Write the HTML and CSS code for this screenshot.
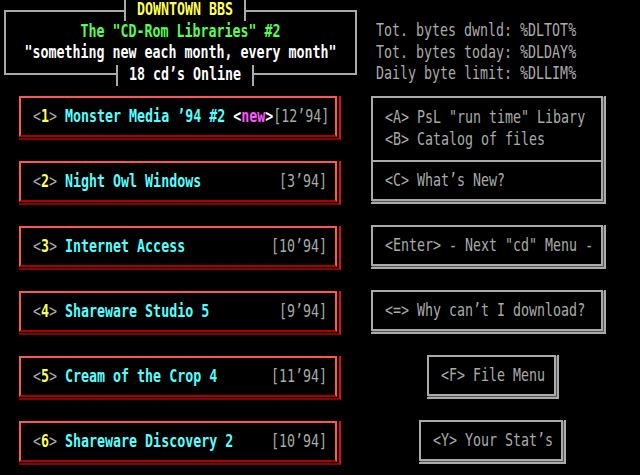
FILE: index.html
```html
<!DOCTYPE html>
<html lang="en">
<head>
<meta charset="utf-8">
<title>DOWNTOWN BBS</title>
<link rel="stylesheet" href="styles.css">
</head>
<body>
<div class="screen">
  <header class="top">
    <div class="frame">
      <div class="frame-title"><span class="t">DOWNTOWN BBS</span></div>
      <div class="frame-line green t">The "CD-Rom Libraries" #2</div>
      <div class="frame-line white t">"something new each month, every month"</div>
      <div class="frame-foot"><span class="t">18 cd’s Online</span></div>
    </div>
    <div class="stats">
      <div class="t">Tot. bytes dwnld: %DLTOT%</div>
      <div class="t">Tot. bytes today: %DLDAY%</div>
      <div class="t">Daily byte limit: %DLLIM%</div>
    </div>
  </header>
  <main class="menu">
    <div class="col-left">
      <div class="rbox"><div class="row t"><span><span class="br">&lt;</span><span class="key">1</span><span class="br">&gt;</span> <span class="name">Monster Media ’94 #2</span> <span class="wb">&lt;</span><span class="new">new</span><span class="wb">&gt;</span></span><span class="date">[12’94]</span></div></div>
      <div class="rbox"><div class="row t"><span><span class="br">&lt;</span><span class="key">2</span><span class="br">&gt;</span> <span class="name">Night Owl Windows</span></span><span class="date">[3’94]</span></div></div>
      <div class="rbox"><div class="row t"><span><span class="br">&lt;</span><span class="key">3</span><span class="br">&gt;</span> <span class="name">Internet Access</span></span><span class="date">[10’94]</span></div></div>
      <div class="rbox"><div class="row t"><span><span class="br">&lt;</span><span class="key">4</span><span class="br">&gt;</span> <span class="name">Shareware Studio 5</span></span><span class="date">[9’94]</span></div></div>
      <div class="rbox"><div class="row t"><span><span class="br">&lt;</span><span class="key">5</span><span class="br">&gt;</span> <span class="name">Cream of the Crop 4</span></span><span class="date">[11’94]</span></div></div>
      <div class="rbox"><div class="row t"><span><span class="br">&lt;</span><span class="key">6</span><span class="br">&gt;</span> <span class="name">Shareware Discovery 2</span></span><span class="date">[10’94]</span></div></div>
    </div>
    <div class="col-right">
      <div class="gbox split">
        <div class="sec sec-top">
          <div class="t">&lt;A&gt; PsL "run time" Libary</div>
          <div class="t">&lt;B&gt; Catalog of files</div>
        </div>
        <div class="sec sec-bot">
          <div class="t">&lt;C&gt; What’s New?</div>
        </div>
      </div>
      <div class="gbox single wide"><div class="t">&lt;Enter&gt; - Next "cd" Menu -</div></div>
      <div class="gbox single wide"><div class="t">&lt;=&gt; Why can’t I download?</div></div>
      <div class="gbox single file"><div class="t">&lt;F&gt; File Menu</div></div>
      <div class="gbox single yours"><div class="t">&lt;Y&gt; Your Stat’s</div></div>
    </div>
  </main>
</div>
</body>
</html>
```

FILE: styles.css
```css
html, body {
  margin: 0;
  padding: 0;
  background: #000;
}

.screen {
  width: 640px;
  height: 475px;
  overflow: hidden;
  background: #000;
  color: #aaaaaa;
  font-family: "DejaVu Sans Mono", "Liberation Mono", monospace;
  font-size: 13.3px;
  white-space: nowrap;
}

.t {
  display: block;
  transform: scaleY(1.3);
}

span.t {
  display: inline-block;
}

/* ---------- header ---------- */
.top {
  display: flex;
  height: 96px;
}

.frame {
  position: relative;
  box-sizing: border-box;
  margin: 10px 0 0 4px;
  width: 353px;
  height: 65px;
  border: 2px solid #aaaaaa;
  padding-top: 10px;
  text-align: center;
}

.frame-line {
  line-height: 20.5px;
  font-weight: bold;
}

.green { color: #55ff55; }
.white { color: #ffffff; }

.frame-title,
.frame-foot {
  position: absolute;
  box-sizing: border-box;
  height: 21px;
  border-left: 2px solid #aaaaaa;
  border-right: 2px solid #aaaaaa;
  background: #000;
  text-align: center;
  line-height: 19px;
  font-weight: bold;
}

.frame-title {
  left: 118px;
  top: -12px;
  width: 122px;
  color: #ffff55;
}

.frame-foot {
  left: 110px;
  top: 53px;
  width: 138px;
  color: #ffffff;
}

.stats {
  margin-left: 19px;
  padding-top: 20px;
  line-height: 21.5px;
  color: #aaaaaa;
}

/* ---------- menu ---------- */
.menu {
  display: flex;
}

.col-left {
  margin-left: 19px;
  width: 322px;
  display: flex;
  flex-direction: column;
  gap: 24px;
}

.col-right {
  margin-left: 30px;
  width: 240px;
  display: flex;
  flex-direction: column;
  align-items: flex-start;
  gap: 24px;
}

.rbox {
  position: relative;
  box-sizing: border-box;
  width: 318px;
  height: 41px;
  border: 2px solid;
  border-color: #ff5555 #ff5555 #aa0000 #ff5555;
  display: flex;
  align-items: center;
  padding: 0 8px 0 12px;
}

.rbox::after {
  content: "";
  position: absolute;
  left: -2px;
  top: -2px;
  right: -6px;
  bottom: -5px;
  border-right: 2px solid #dd1111;
  border-bottom: 2px solid #880000;
  pointer-events: none;
}

.row {
  display: flex;
  justify-content: space-between;
  width: 100%;
}

.br { color: #aaaaaa; }
.key { color: #ffff55; font-weight: bold; }
.name { color: #55ffff; font-weight: bold; }
.wb { color: #ffffff; font-weight: bold; }
.new { color: #ff55ff; font-weight: bold; }
.date { color: #aaaaaa; }

.gbox {
  position: relative;
  box-sizing: border-box;
  border: 2px solid #aaaaaa;
  box-shadow: 1px 1px 0 #555555;
  color: #aaaaaa;
}

.gbox::after {
  content: "";
  position: absolute;
  left: -2px;
  top: -2px;
  right: -5px;
  bottom: -5px;
  border-right: 2px solid #aaaaaa;
  border-bottom: 2px solid #aaaaaa;
  pointer-events: none;
}

.gbox.split {
  width: 232px;
  height: 105px;
}

.sec {
  padding-left: 12px;
  line-height: 21.5px;
}

.sec-top {
  padding-top: 9px;
  padding-bottom: 10px;
}

.sec-bot {
  border-top: 2px solid #aaaaaa;
  padding-top: 8px;
}

.gbox.single {
  height: 41px;
  display: flex;
  align-items: center;
  padding-left: 12px;
}

.gbox.wide { width: 232px; }
.gbox.file { width: 129px; margin-left: 56px; }
.gbox.yours { width: 144px; margin-left: 48px; }
```
